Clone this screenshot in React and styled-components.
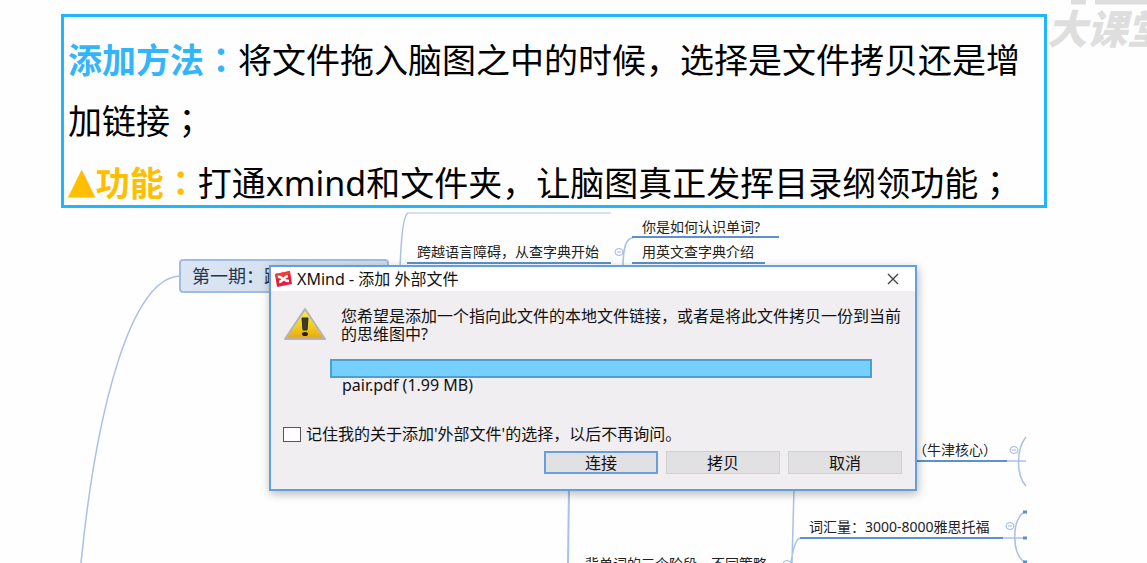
import React from "react";
import styled, { createGlobalStyle, css } from "styled-components";

const GlobalStyle = createGlobalStyle`
  *, *::before, *::after { box-sizing: border-box; }
  body {
    margin: 0;
    background: #fefefe;
    color: #111;
    font-family: "Noto Sans", "Noto Sans CJK SC", sans-serif;
  }
  p, h2 { margin: 0; font-weight: 400; }
`;

const Slide = styled.main`
  position: relative;
  display: flex;
  flex-direction: column;
  height: 100vh;
  min-height: 500px;
  padding-top: 14px;
  overflow: hidden;
`;

const Note = styled.section`
  display: flex;
  flex-direction: column;
  gap: 10px;
  margin: 0 100px 0 61px;
  padding: 13px 4px 1px;
  border: 3px solid #1fb6fb;
  font-size: 34px;
  color: #000;
`;

const NoteText = styled.p`
  line-height: ${(p) => (p.$tight ? 42 : 61)}px;
`;

const Lead = styled.strong`
  font-weight: 700;
  color: ${(p) => p.$color};
`;

const Triangle = styled.span`
  font: 400 36px/1 "DejaVu Sans", sans-serif;
  vertical-align: 3px;
`;

/* Traditional Chinese forms centre the colon and semicolon in their cell. */
const Mark = styled.span`
  font-family: "Noto Sans CJK TC", sans-serif;
  line-height: 1;
`;

const Watermark = styled.div`
  position: absolute;
  top: 0;
  right: -20px;
  color: #dededf;
  font-size: 40px;
  font-weight: 900;
  font-style: italic;
  line-height: 58px;
  white-space: nowrap;

  svg {
    position: absolute;
    top: 0;
    left: 24px;
  }
`;

const Canvas = styled.section`
  position: relative;
  flex: 1;
  min-height: 0;
  overflow: hidden;
`;

const Links = styled.svg`
  position: absolute;
  inset: 0;
  width: 100%;
  height: 100%;
  fill: none;
  stroke: #a9c1e6;
  stroke-width: 2;
`;

const Topic = styled.div`
  position: absolute;
  left: ${(p) => p.$x}px;
  top: ${(p) => p.$y}px;
  font-size: 14px;
  line-height: 20px;
  white-space: nowrap;
  color: #222;

  ${(p) =>
    p.$main &&
    css`
      width: 210px;
      height: 34px;
      padding: 0 11px;
      border: 2px solid #9fbde3;
      border-radius: 4px;
      background: linear-gradient(90deg, #dbe5f3, #cfdcec);
      color: #1f3554;
      font-size: 18px;
      line-height: 30px;
      overflow: hidden;
    `}
`;

const Dialog = styled.form`
  position: absolute;
  left: 269px;
  top: 57px;
  width: 648px;
  border: 2px solid #62a0dc;
  background: #f0eef0;
  box-shadow: 1px 3px 9px rgba(0, 0, 0, 0.28);
  font-size: 16px;
  line-height: 18px;
`;

const TitleBar = styled.header`
  display: flex;
  align-items: center;
  gap: 4px;
  height: 24px;
  padding: 0 14px 0 3px;
  background: #fff;
`;

const Title = styled.h2`
  flex: 1;
  font-size: 16px;
  line-height: 22px;
`;

const Close = styled.button`
  display: flex;
  padding: 2px;
  border: 0;
  background: none;
`;

const Message = styled.div`
  display: flex;
  gap: 14px;
  padding: 16px 10px 0 12px;
`;

const Question = styled.p`
  flex: 1;
`;

const FileInfo = styled.div`
  padding: 16px 43px 0 59px;
`;

const FileBar = styled.div`
  height: 19px;
  border: 2px solid #4d9fcd;
  background: #75d0ff;
`;

const FileName = styled.p`
  padding-left: 12px;
  line-height: 14px;
`;

const Remember = styled.label`
  display: flex;
  align-items: center;
  gap: 5px;
  padding: 33px 0 0 12px;
`;

const Check = styled.input`
  appearance: none;
  width: 18px;
  height: 15px;
  margin: 0;
  border: 1px solid #555;
  background: #fff;
`;

const Actions = styled.div`
  display: flex;
  justify-content: flex-end;
  gap: 8px;
  padding: 8px 13px 15px;
`;

const Button = styled.button`
  width: 114px;
  height: 23px;
  padding: 0;
  border: ${(p) => (p.$primary ? "2px solid #669fdc" : "1px solid #cfd0d1")};
  background: #e1e0e2;
  color: #111;
  font: inherit;
  line-height: 18px;
`;

const XMindLogo = () => (
  <svg width="19" height="17" viewBox="0 0 19 17" aria-hidden="true">
    <path d="M1 3 16 0 18 13 3 16Z" fill="#e91d3b" />
    <path d="M1 3 16 0 16 3 2 8Z" fill="#f2402f" />
    <path
      d="M4 6C8 5 9 10 15 10M5 11C9 11 9 6 14 5"
      fill="none"
      stroke="#fff"
      strokeWidth="2.6"
    />
  </svg>
);

const WarningIcon = () => (
  <svg width="44" height="34" viewBox="0 0 44 34" aria-hidden="true">
    <defs>
      <linearGradient id="warn" x1="0" y1="0" x2="0" y2="1">
        <stop offset="0" stopColor="#f6ef3a" />
        <stop offset="0.55" stopColor="#f2cf1c" />
        <stop offset="1" stopColor="#eda51a" />
      </linearGradient>
    </defs>
    <path
      d="M22 2 42 32H2Z"
      fill="#c9c9cc"
      stroke="#b4b3b5"
      strokeWidth="2"
      strokeLinejoin="round"
    />
    <path d="M22 4 40 31H4Z" fill="url(#warn)" />
    <path d="M19 11H25L24 23H20Z" fill="#3d3b2c" stroke="#2d2a18" strokeLinejoin="round" />
    <ellipse cx="22" cy="27" rx="3" ry="2" fill="#26220f" />
  </svg>
);

const CloseIcon = () => (
  <svg width="12" height="12" viewBox="0 0 12 12" aria-hidden="true">
    <path d="M1 1 11 11M11 1 1 11" stroke="#444" strokeWidth="1.4" />
  </svg>
);

const Fold = ({ x, y }) => (
  <g stroke="#9bb8e2" strokeWidth="1">
    <ellipse cx={x} cy={y} rx="4" ry="3.5" />
    <path d={`M${x - 2} ${y}h4`} />
  </g>
);

export default function App() {
  return (
    <>
      <GlobalStyle />
      <Slide>
        <Note>
          <NoteText>
            <Lead $color="#33b5fb">
              添加方法<Mark>：</Mark>
            </Lead>
            将文件拖入脑图之中的时候，选择是文件拷贝还是增加链接<Mark>；</Mark>
          </NoteText>
          <NoteText $tight>
            <Lead $color="#ffbf00">
              <Triangle>▲</Triangle>功能<Mark>：</Mark>
            </Lead>
            打通xmind和文件夹，让脑图真正发挥目录纲领功能<Mark>；</Mark>
          </NoteText>
        </Note>

        <Watermark>
          大课堂
          <svg width="90" height="6" viewBox="0 0 90 6" aria-hidden="true">
            <path d="M0 2H15M24 2H90" stroke="#dededf" strokeWidth="5" />
          </svg>
        </Watermark>

        <Canvas>
          <Links aria-hidden="true">
            <g transform="translate(0 -208)">
              <path d="M180 276C130 278 96 412 81 563" strokeWidth="1.5" />
              <path d="M408 213H611" stroke="#d5e0f0" />
              <path d="M400 268C401 240 403 215 408 213" strokeWidth="1.5" />
              <path d="M623 268C623 250 625 238 633 238" strokeWidth="1.5" />
              <path d="M569 488 568 563" />
              <path d="M794 488 792 563M791 563C793 548 796 538 801 538" strokeWidth="1.5" />
              <path d="M1006 461H1026M1026 437C1016 449 1016 475 1026 486" strokeWidth="1.5" />
              <path d="M1002 538H1025M1026 512C1011 514 1011 559 1026 562" strokeWidth="1.5" />
              <g stroke="#5b91d1">
                <path d="M632 237H779M407 263H611M632 263H765" />
                <path d="M916 461H1007M800 538H1003" />
              </g>
              <path d="M1023 512h4M1023 538h4M1023 562h4" stroke="#5b91d1" strokeWidth="3" />
              <Fold x={619} y={252} />
              <Fold x={1014} y={450} />
              <Fold x={1010} y={526} />
              <Fold x={787} y={564} />
            </g>
          </Links>
          <Topic $main $x={179} $y={51}>第一期：跨越语言障碍</Topic>
          <Topic $x={417} $y={34}>跨越语言障碍，从查字典开始</Topic>
          <Topic $x={642} $y={9}>你是如何认识单词?</Topic>
          <Topic $x={642} $y={34}>用英文查字典介绍</Topic>
          <Topic $x={913} $y={232}>（牛津核心）</Topic>
          <Topic $x={809} $y={309}>词汇量：3000-8000雅思托福</Topic>
          <Topic $x={585} $y={346}>背单词的三个阶段，不同策略</Topic>

          <Dialog onSubmit={(e) => e.preventDefault()}>
            <TitleBar>
              <XMindLogo />
              <Title>XMind - 添加 外部文件</Title>
              <Close type="button" aria-label="关闭">
                <CloseIcon />
              </Close>
            </TitleBar>
            <Message>
              <WarningIcon />
              <Question>
                您希望是添加一个指向此文件的本地文件链接，或者是将此文件拷贝一份到当前的思维图中?
              </Question>
            </Message>
            <FileInfo>
              <FileBar />
              <FileName>pair.pdf (1.99 MB)</FileName>
            </FileInfo>
            <Remember>
              <Check type="checkbox" />
              记住我的关于添加'外部文件'的选择，以后不再询问。
            </Remember>
            <Actions>
              <Button $primary>连接</Button>
              <Button type="button">拷贝</Button>
              <Button type="button">取消</Button>
            </Actions>
          </Dialog>
        </Canvas>
      </Slide>
    </>
  );
}
